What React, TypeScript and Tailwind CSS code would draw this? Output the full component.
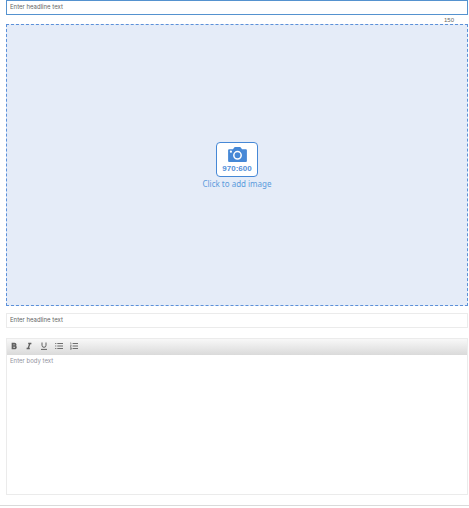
import type { ReactNode } from "react";

const HEADLINE_LIMIT = 150;

function ToolButton({ label, children }: { label: string; children: ReactNode }) {
  return (
    <button type="button" aria-label={label} className="flex h-3 w-[11px] items-center justify-center text-[#606060]">
      {children}
    </button>
  );
}

function BoldIcon() {
  return (
    <svg viewBox="0 0 8 8" className="size-2" fill="none" stroke="currentColor" strokeWidth="1.7">
      <path d="M2.5 1.7h2a1.1 1.1 0 0 1 0 2.3h-2zM2.5 4h2.2a1.2 1.2 0 0 1 0 2.5H2.5z" />
    </svg>
  );
}

function ItalicIcon() {
  return (
    <svg viewBox="0 0 8 8" className="size-2" fill="none" stroke="currentColor" strokeWidth="1.3">
      <path d="M3.2 1.5h3.2M1.6 6.5h3.2M4.9 1.5L3.1 6.5" />
    </svg>
  );
}

function UnderlineIcon() {
  return (
    <svg viewBox="0 0 8 8" className="size-2" fill="none" stroke="currentColor">
      <path d="M2 .5v2.8a2 2 0 0 0 4 0V.5M1 7.4h6" />
    </svg>
  );
}

function BulletsIcon() {
  return (
    <svg viewBox="0 0 8 8" className="size-2" fill="none" stroke="currentColor" strokeWidth="0.9">
      <path d="M2.3 1.5H8M2.3 4H8M2.3 6.5H8M.2 1.5h1.1M.2 4h1.1M.2 6.5h1.1" />
    </svg>
  );
}

function NumbersIcon() {
  return (
    <svg viewBox="0 0 8 8" className="size-2" fill="none" stroke="currentColor" strokeWidth="0.9">
      <path d="M2.6 1.5H8M2.6 4H8M2.6 6.5H8" />
      <path strokeWidth="0.6" d="M.3.8h.6v1.6M.1 3.3h1.2L.2 4.7h1.2M.1 5.7h1.2v1.6H.1M.5 6.5h.8" />
    </svg>
  );
}

function CameraIcon() {
  return (
    <svg viewBox="0 0 19 15" className="h-[15px] w-[19px]">
      <path
        fill="#4688d6"
        d="M1.1 2.2H5L6.2.5Q6.5.1 7 .1h5q.5 0 .8.4L14 2.2h3.9q1 0 1 1v10.7q0 1-1 1H1.1q-1 0-1-1V3.2q0-1 1-1z"
      />
      <circle cx="9.5" cy="8.3" r="3.7" fill="none" stroke="#ffffff" strokeWidth="1.5" />
      <circle cx="2.9" cy="4.7" r="1.1" fill="#ffffff" />
    </svg>
  );
}

export default function App() {
  return (
    <main className="bg-white font-['Inter','Liberation_Sans',Arial,sans-serif] text-[6px] leading-2 text-[#666666]">
      <form className="border-b border-[#dadada] pr-px pb-[10px] pl-[6px]">
        <input
          type="text"
          aria-label="Headline"
          placeholder="Enter headline text"
          className="block h-[15px] w-full border border-[#5592cf] bg-white px-[3px] pb-[2px] outline-none placeholder:text-[#666666]"
        />
        <p className="flex h-[9px] items-center justify-end pr-[14px] font-['Liberation_Sans',Arial,sans-serif]">
          {HEADLINE_LIMIT}
        </p>

        <button
          type="button"
          className="flex h-[282px] w-full flex-col items-center justify-center gap-[3px] border border-dashed border-[#5b90d9] bg-[#e5ecf8]"
        >
          <span className="flex h-[35px] w-[42px] flex-col items-center justify-center gap-[3px] rounded-[4px] border border-[#4688d6] bg-white">
            <CameraIcon />
            <span className="font-['Liberation_Sans',Arial,sans-serif] text-[8px] leading-2 font-bold text-[#5590d9]">
              970:600
            </span>
          </span>
          <span className="font-['Noto_Sans','Open_Sans',sans-serif] text-[8px] leading-2 text-[#5b9bdc]">
            Click to add image
          </span>
        </button>

        <input
          type="text"
          aria-label="Second headline"
          placeholder="Enter headline text"
          className="mt-[7px] block h-[15px] w-full border border-[#ebebeb] bg-white px-[3px] pb-[2px] outline-none placeholder:text-[#666666]"
        />

        <section className="mt-[10px] border border-[#ebebeb]">
          <div
            role="toolbar"
            aria-label="Formatting"
            className="flex h-4 items-center gap-1 bg-linear-to-b from-[#f8f8f8] to-[#dadada] px-px pb-[2px]"
          >
            <ToolButton label="Bold">
              <BoldIcon />
            </ToolButton>
            <ToolButton label="Italic">
              <ItalicIcon />
            </ToolButton>
            <ToolButton label="Underline">
              <UnderlineIcon />
            </ToolButton>
            <ToolButton label="Bulleted list">
              <BulletsIcon />
            </ToolButton>
            <ToolButton label="Numbered list">
              <NumbersIcon />
            </ToolButton>
          </div>
          <textarea
            aria-label="Body"
            placeholder="Enter body text"
            className="block h-[139px] w-full resize-none bg-white px-[3px] py-[2px] outline-none placeholder:text-[#9494a0]"
          />
        </section>
      </form>
    </main>
  );
}
